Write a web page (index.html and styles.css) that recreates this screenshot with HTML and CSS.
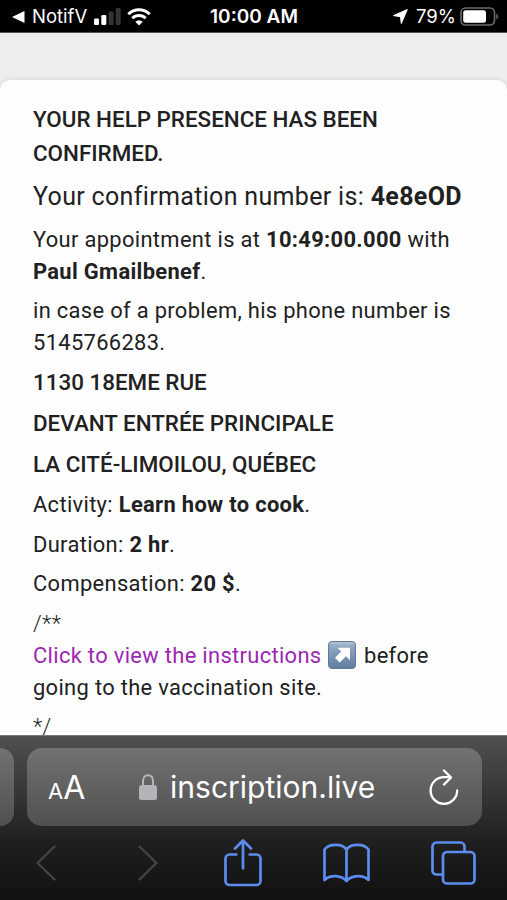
FILE: index.html
```html
<!DOCTYPE html>
<html lang="en">
<head>
  <meta charset="UTF-8">
  <title>Confirmation</title>
  <meta name="viewport" content="width=device-width, initial-scale=1.0">
  <link rel="stylesheet" href="styles.css">
</head>
<body>

  <header class="status-bar">
    <div class="status-left">
      <svg class="back" width="13" height="12" viewBox="0 0 13 12"><path d="M12.5 0v12L0 6z" fill="#fff"/></svg>
      <span class="back-app">NotifV</span>
      <svg class="signal" width="27" height="17" viewBox="0 0 27 17">
        <rect x="0" y="10.500" width="5" height="6.500" rx="1.200" fill="#fff"/>
        <rect x="7.300" y="7" width="5" height="10" rx="1.200" fill="#fff"/>
        <rect x="14.600" y="3.500" width="5" height="13.500" rx="1.200" fill="#343434"/>
        <rect x="21.700" y="0" width="5" height="17" rx="1.200" fill="#343434"/>
      </svg>
      <svg class="wifi" width="24" height="18" viewBox="0 0 24 18" fill="none" stroke="#fff" stroke-width="3">
        <path d="M1.300 6.200a15.300 15.300 0 0 1 21.400 0"/>
        <path d="M5.300 10.300a9.600 9.600 0 0 1 13.400 0"/>
        <path d="M12 17.600l-3.700-3.800a5.300 5.300 0 0 1 7.400 0z" fill="#fff" stroke="none"/>
      </svg>
    </div>
    <div class="clock">10:00 AM</div>
    <div class="status-right">
      <svg class="location" width="15" height="15" viewBox="0 0 15 15"><path d="M14.300.500L8.300 14.500 7.500 7.700 .5 6.600z" fill="#fff" stroke="#fff" stroke-linejoin="round"/></svg>
      <span class="percent">79%</span>
      <svg class="battery" width="39" height="19" viewBox="0 0 39 19">
        <rect x="1" y="1" width="33.500" height="17" rx="4.500" fill="none" stroke="#6b6b6b" stroke-width="1.600"/>
        <rect x="3.200" y="3.200" width="22.800" height="12.600" rx="2.500" fill="#fff"/>
        <path d="M36.300 6.500v6q1.900-1 1.900-3t-1.900-3z" fill="#6b6b6b"/>
      </svg>
    </div>
  </header>

  <main class="page">
    <div class="card">
      <h2>YOUR HELP PRESENCE HAS BEEN CONFIRMED.</h2>
      <p class="confirmation">Your confirmation number is: <strong>4e8eOD</strong></p>
      <p>Your appointment is at <strong>10:49:00.000</strong> with <strong>Paul Gmailbenef</strong>.</p>
      <p>in case of a problem, his phone number is 5145766283.</p>
      <h2>1130 18EME RUE</h2>
      <h2>DEVANT ENTRÉE PRINCIPALE</h2>
      <h2>LA CITÉ-LIMOILOU, QUÉBEC</h2>
      <p>Activity: <strong>Learn how to cook</strong>.</p>
      <p>Duration: <strong>2 hr</strong>.</p>
      <p>Compensation: <strong>20 $</strong>.</p>
      <div class="instructions">
        <div class="mark">/**</div>
        <p><a href="#">Click to view the instructions</a>
          <svg class="arrow" width="28" height="28" viewBox="0 0 28 28">
            <defs>
              <linearGradient id="tile" x1="0" y1="0" x2="0" y2="1">
                <stop offset="0" stop-color="#a3b8cf"/>
                <stop offset=".25" stop-color="#8ba5c0"/>
                <stop offset="1" stop-color="#5f7c9e"/>
              </linearGradient>
            </defs>
            <rect x=".5" y=".5" width="27" height="27" rx="3.500" fill="url(#tile)" stroke="#637a96"/>
            <path d="M2.500 2.200h23" stroke="#b9c9da"/>
            <path d="M9.500 6.700h12.500v12.500l-4-4-6.300 6.300-4.700-4.700 6.300-6.300z" fill="#fff"/>
          </svg> before going to the vaccination site.</p>
        <div class="mark">*/</div>
      </div>
    </div>
  </main>

  <footer class="browser">
    <div class="tabs">
      <div class="tab previous"></div>
      <div class="tab address">
        <div class="text-size"><small>A</small>A</div>
        <div class="url">
          <svg width="18" height="26" viewBox="0 0 18 26">
            <path d="M4 13V7.200C4 3.500 6 1.300 9 1.300s5 2.200 5 5.900V13" fill="none" stroke="#b5b3ba" stroke-width="2"/>
            <rect x="0" y="11" width="18" height="15" rx="2.500" fill="#b5b3ba"/>
          </svg>
          <span>inscription.live</span>
        </div>
        <svg class="reload" width="30" height="36" viewBox="0 0 30 36" fill="none" stroke="#fff" stroke-width="2.300" stroke-linecap="round" stroke-linejoin="round">
          <path d="M28.200 21.500A13.300 13.300 0 1 1 15 8.200h6"/>
          <path d="M15 1.500l7 7-7 7"/>
        </svg>
      </div>
    </div>
    <nav class="toolbar">
      <svg class="prev-page" width="20" height="36" viewBox="0 0 20 36" fill="none" stroke="#454545" stroke-width="2.300" stroke-linecap="round" stroke-linejoin="round"><path d="M18.500 1.500L1.500 18l17 16.500"/></svg>
      <svg class="next-page" width="20" height="36" viewBox="0 0 20 36" fill="none" stroke="#454545" stroke-width="2.300" stroke-linecap="round" stroke-linejoin="round"><path d="M1.500 1.500L18.500 18l-17 16.500"/></svg>
      <svg width="38" height="48" viewBox="0 0 38 48" fill="none" stroke="#5b8def" stroke-width="2.700" stroke-linecap="round" stroke-linejoin="round">
        <path d="M12.300 15.500H5.500a4 4 0 0 0-4 4V42a4 4 0 0 0 4 4h27a4 4 0 0 0 4-4V19.500a4 4 0 0 0-4-4h-6.800"/>
        <path d="M19 29.500V1.500M11 9.500l8-8 8 8"/>
      </svg>
      <svg width="47" height="40" viewBox="0 0 47 40" fill="none" stroke="#5b8def" stroke-width="2.700" stroke-linecap="round" stroke-linejoin="round">
        <path d="M23.500 38C18 32 7.500 31.500 1.500 37V6.500C6 .5 19 0 23.500 6.500 28 0 41 .5 45.500 6.500V37C39.500 31.500 29 32 23.500 38zM23.500 6.500V38"/>
      </svg>
      <svg width="45" height="44" viewBox="0 0 45 44" fill="none" stroke="#5b8def" stroke-width="2.700" stroke-linejoin="round">
        <path d="M12 33.500H5.500a4 4 0 0 1-4-4v-24a4 4 0 0 1 4-4h24a4 4 0 0 1 4 4V11"/>
        <rect x="12" y="11" width="31.500" height="31.500" rx="4"/>
      </svg>
    </nav>
  </footer>

</body>
</html>
```

FILE: styles.css
```css
* {
  box-sizing: border-box;
}

body {
  margin: 0;
  height: 900px;
  display: flex;
  flex-direction: column;
  overflow: hidden;
  background-color: #eee;
  color: #212121;
  font-family: Roboto, sans-serif;
}

svg {
  display: block;
  flex: none;
}

/* phone status bar */
.status-bar {
  flex: none;
  height: 33px;
  padding: 1px 8px 0 12px;
  display: grid;
  grid-template-columns: 1fr auto 1fr;
  align-items: center;
  background-color: #000;
  border-bottom: 1px solid #555;
  color: #fff;
  font-family: Inter, sans-serif;
  font-size: 18.5px;
  line-height: 31px;
}

.status-left, .status-right {
  display: flex;
  align-items: center;
}

.status-right {
  justify-content: flex-end;
}

.back-app {
  margin-left: 7px;
}

.signal {
  margin-left: 7px;
}

.wifi {
  margin-left: 6px;
}

.clock {
  margin-right: 3px;
  font-size: 19px;
  font-weight: 600;
}

.percent {
  margin: 0 4px 0 8px;
}

/* page content */
.page {
  height: 702px;
  padding-top: 47px;
  overflow: hidden;
}

.card {
  height: 800px;
  padding: 23px 33px;
  border-radius: 10px 10px 0 0;
  background-color: #fefefe;
  box-shadow: 0 0 5px rgba(0, 0, 0, 0.12);
}

h2, p {
  margin: 0 0 7.6px;
}

h2 {
  font-size: 22.4px;
  font-weight: 500;
  line-height: 33.6px;
}

p, .mark {
  font-size: 21.9px;
  line-height: 31.7px;
  letter-spacing: 0.33px;
}

.confirmation {
  font-size: 25px;
  line-height: 38.5px;
  white-space: nowrap;
}

.instructions {
  padding-top: 1px;
}

.instructions a {
  color: #9c27b0;
  text-decoration: none;
}

.arrow {
  display: inline-block;
  margin: -1px 2px 0 1px;
  vertical-align: -6px;
}

.mark {
  font-weight: 300;
}

/* browser controls */
.browser {
  flex: none;
  height: 165px;
  padding-top: 12px;
  background: linear-gradient(#505050, #1f1f1f 65%, #111);
  border-top: 1px solid #777;
}

.tabs {
  display: flex;
  gap: 13px;
}

.tab {
  flex: none;
  height: 78px;
  border-radius: 15px;
  background: linear-gradient(#727272, #505050);
}

.previous {
  width: 14px;
  border-radius: 0 15px 15px 0;
}

.address {
  width: 455px;
  padding: 0 23px 0 21px;
  display: flex;
  align-items: center;
  justify-content: space-between;
  color: #fff;
  font-family: Inter, sans-serif;
}

.text-size {
  font-size: 32px;
}

.text-size small {
  font-size: 22px;
}

.url {
  display: flex;
  align-items: center;
  gap: 13px;
  font-size: 30px;
}

.toolbar {
  display: flex;
  align-items: center;
  gap: 61px;
  height: 74px;
  padding-left: 36px;
}

.prev-page {
  margin-right: 21px;
}

.next-page {
  margin-right: 5px;
}
```
